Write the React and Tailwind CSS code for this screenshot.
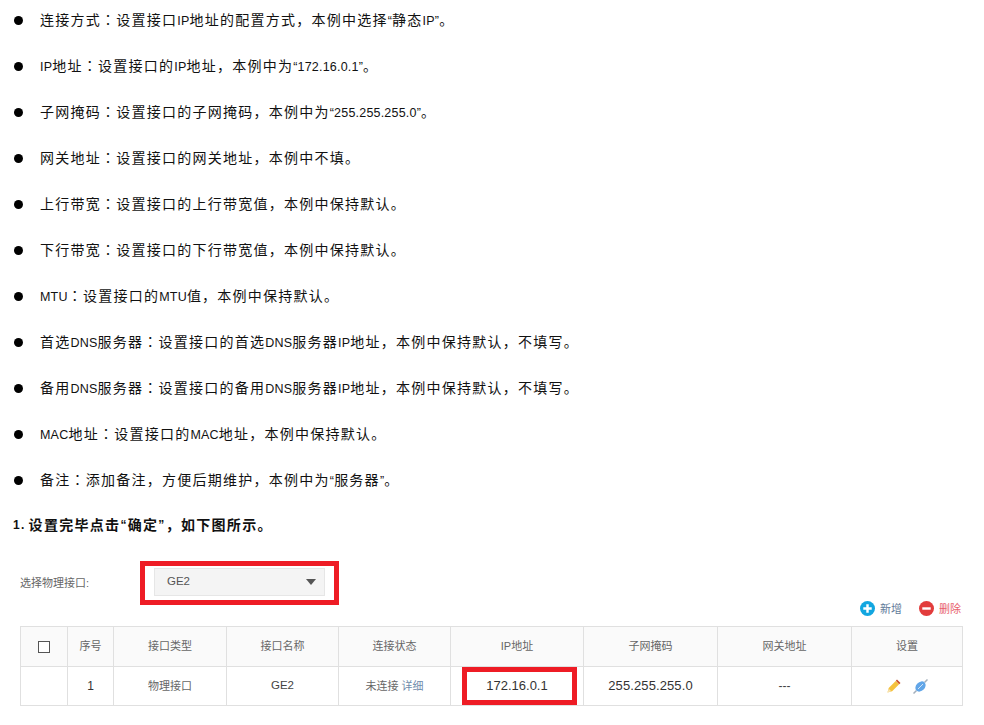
import React from "react";

const FONT = "font-['Liberation_Sans','Noto_Sans_CJK_SC',sans-serif]";

// latin runs are drawn smaller than the chinese text in the picture
function L({ children }) {
  return <span className="text-[12.5px] tracking-[0.2px]">{children}</span>;
}

// the colon sits in the middle of its cell in the picture
function C() {
  return <span className="font-['Noto_Sans_CJK_TC',sans-serif]">：</span>;
}

const items = [
  <>连接方式<C />设置接口<L>IP</L>地址的配置方式，本例中选择<L>“</L>静态<L>IP”</L>。</>,
  <><L>IP</L>地址<C />设置接口的<L>IP</L>地址，本例中为<L>“172.16.0.1”</L>。</>,
  <>子网掩码<C />设置接口的子网掩码，本例中为<L>“255.255.255.0”</L>。</>,
  <>网关地址<C />设置接口的网关地址，本例中不填。</>,
  <>上行带宽<C />设置接口的上行带宽值，本例中保持默认。</>,
  <>下行带宽<C />设置接口的下行带宽值，本例中保持默认。</>,
  <><L>MTU</L><C />设置接口的<L>MTU</L>值，本例中保持默认。</>,
  <>首选<L>DNS</L>服务器<C />设置接口的首选<L>DNS</L>服务器<L>IP</L>地址，本例中保持默认，不填写。</>,
  <>备用<L>DNS</L>服务器<C />设置接口的备用<L>DNS</L>服务器<L>IP</L>地址，本例中保持默认，不填写。</>,
  <><L>MAC</L>地址<C />设置接口的<L>MAC</L>地址，本例中保持默认。</>,
  <>备注<C />添加备注，方便后期维护，本例中为<L>“</L>服务器<L>”</L>。</>,
];

const headers = ["序号", "接口类型", "接口名称", "连接状态", "IP地址", "子网掩码", "网关地址", "设置"];
const widths = ["w-[47px]", "w-[46px]", "w-[113px]", "w-[112px]", "w-[112px]", "w-[133px]", "w-[134px]", "w-[134px]", "w-[111px]"];

function PlusIcon() {
  return (
    <svg width="15" height="15" viewBox="0 0 16 16">
      <circle cx="8" cy="8" r="8" fill="#12a6e0" />
      <path d="M8 3.5v9M3.5 8h9" stroke="#fff" strokeWidth="2.6" />
    </svg>
  );
}

function MinusIcon() {
  return (
    <svg width="15" height="15" viewBox="0 0 16 16">
      <circle cx="8" cy="8" r="8" fill="#e23c3c" />
      <path d="M3.5 8h9" stroke="#fff" strokeWidth="2.6" />
    </svg>
  );
}

function PencilIcon() {
  return (
    <svg width="14" height="14" viewBox="0 0 14 14">
      <path d="M0.5 13.5l1.2-4.6 7-7 3.4 3.4-7 7z" fill="#f5c23e" />
      <path d="M8.8 1.8l1.2-1.3 3.5 3.5-1.3 1.3z" fill="#c9502a" />
      <path d="M0.5 13.5l1.2-3.8 2.6 2.6z" fill="#f6e2b0" />
    </svg>
  );
}

function LinkIcon() {
  return (
    <svg width="15" height="15" viewBox="0 0 15 15">
      <path d="M0.5 14.5l3-3M11.5 3.5l3-3" stroke="#a3afbc" strokeWidth="1.5" />
      <ellipse cx="7.5" cy="7.5" rx="4.4" ry="5.8" transform="rotate(45 7.5 7.5)" fill="#62a6e8" />
      <path d="M5 10l5-5" stroke="#d3e5f7" strokeWidth="1" />
    </svg>
  );
}

export default function App() {
  return (
    <div className={`${FONT} w-[984px] h-[725px] overflow-hidden bg-white text-black`}>
      <ul className="flex flex-col gap-[6px] pl-[14px]">
        {items.map((item, i) => (
          <li key={i} className="flex items-center h-[40px] text-[14px] tracking-[1.25px] text-[#111]">
            <span className="w-[9px] h-[9px] rounded-full bg-black shrink-0 mr-[17px]" />
            <span>{item}</span>
          </li>
        ))}
      </ul>

      <p className="mt-[14px] h-[22px] pl-[13px] flex items-center text-[14px] font-bold tracking-[1.3px] text-[#111]">
        <span className="text-[12px] mr-[3px]">1.</span>设置完毕点击<span className="text-[12px]">“</span>确定<span className="text-[12px]">”</span>，如下图所示。
      </p>

      <section className="mt-[25px] pl-[20px] pr-[21px]">
        <div className="flex justify-between h-[56px]">
          <div className="flex items-start">
            <span className="w-[120px] h-[44px] flex items-center text-[11px] text-[#666]">选择物理接口:</span>
            <div className="w-[199px] h-[44px] border-[5px] border-[#ee1c25] pt-[2px] px-[9px]">
              <div className="h-[28px] flex items-center justify-between bg-[#f4f4f4] border border-[#e6e6e6] pl-[12px] pr-[8px] text-[11.5px] text-[#555]">
                <span>GE2</span>
                <span className="w-0 h-0 border-x-[5px] border-x-transparent border-t-[6px] border-t-[#555]" />
              </div>
            </div>
          </div>
          <div className="flex items-end gap-[17px] pr-[2px] text-[11px]">
            <span className="flex items-center gap-[5px] text-[#5f7a99]"><PlusIcon />新增</span>
            <span className="flex items-center gap-[5px] text-[#e8606a]"><MinusIcon />删除</span>
          </div>
        </div>

        <table className="mt-[9px] w-[942px] table-fixed border-collapse text-[11px] text-center text-[#666]">
          <colgroup>
            {widths.map((w, i) => <col key={i} className={w} />)}
          </colgroup>
          <thead>
            <tr className="h-[40px] bg-[#fafafa]">
              <th className="border border-[#e0e0e0] font-normal">
                <span className="inline-block align-middle w-[12px] h-[12px] border-[1.5px] border-[#555] bg-white" />
              </th>
              {headers.map((h) => (
                <th key={h} className="border border-[#e0e0e0] font-normal">{h}</th>
              ))}
            </tr>
          </thead>
          <tbody>
            <tr className="h-[39px]">
              <td className="border border-[#e0e0e0]"></td>
              <td className="border border-[#e0e0e0] text-[12px] text-[#333]">1</td>
              <td className="border border-[#e0e0e0]">物理接口</td>
              <td className="border border-[#e0e0e0] text-[11.5px] text-[#444]">GE2</td>
              <td className="border border-[#e0e0e0]">未连接 <span className="text-[#6f8bab]">详细</span></td>
              <td className="border border-[#e0e0e0] relative text-[13px] text-[#333]">
                172.16.0.1
                <span className="absolute left-[11px] top-0 w-[115px] h-[38px] border-[5px] border-[#ee1c25]" />
              </td>
              <td className="border border-[#e0e0e0] text-[13px] tracking-[0.1px] text-[#333]">255.255.255.0</td>
              <td className="border border-[#e0e0e0] text-[12px] text-[#444]">---</td>
              <td className="border border-[#e0e0e0]">
                <div className="flex items-center justify-center gap-[12px]">
                  <PencilIcon />
                  <LinkIcon />
                </div>
              </td>
            </tr>
          </tbody>
        </table>
      </section>
    </div>
  );
}
